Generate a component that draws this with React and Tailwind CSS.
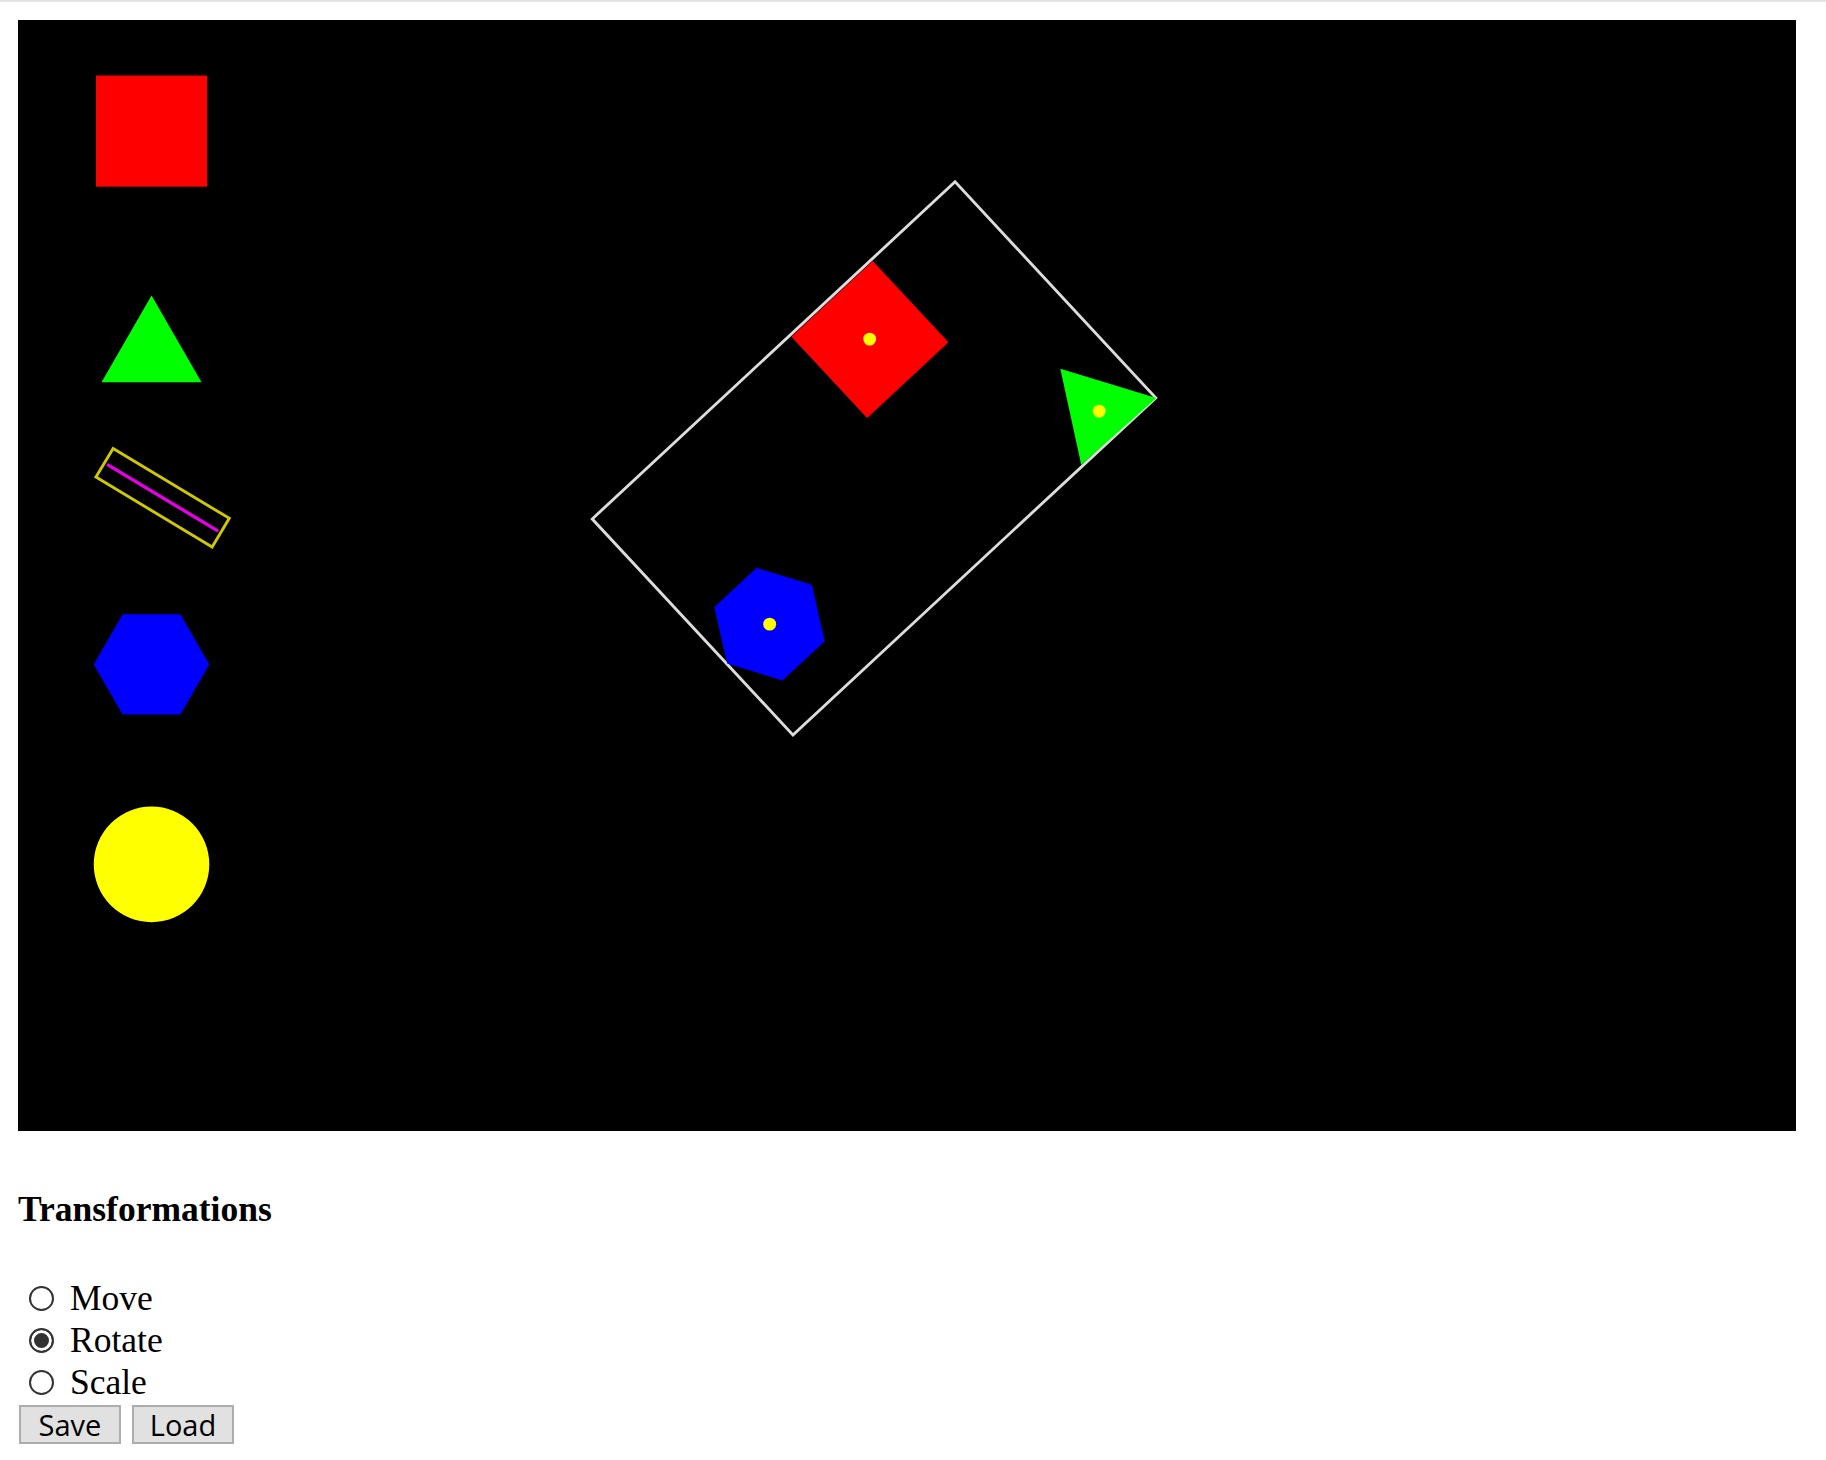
import { useState } from 'react';

const modes = ['Move', 'Rotate', 'Scale'];

function hexPoints(cx, cy, r, start = 0) {
  const pts = [];
  for (let i = 0; i < 6; i++) {
    const a = ((start + i * 60) * Math.PI) / 180;
    pts.push(`${(cx + r * Math.cos(a)).toFixed(2)},${(cy + r * Math.sin(a)).toFixed(2)}`);
  }
  return pts.join(' ');
}

function Stage() {
  return (
    <svg viewBox="0 0 800 500" className="block h-[1111px] w-[1778px] bg-black">
      {/* palette */}
      <rect x="35" y="25" width="50" height="50" fill="#ff0000" />
      <polygon points="60,124 82.5,163 37.5,163" fill="#00ff00" />
      <rect
        x="-30.5"
        y="-7.5"
        width="61"
        height="15"
        transform="translate(65 215) rotate(31)"
        fill="none"
        stroke="#d0c800"
        strokeWidth="1.3"
      />
      <line x1="40" y1="200" x2="90" y2="230" stroke="#e600e6" strokeWidth="1.5" />
      <polygon points={hexPoints(60, 290, 26)} fill="#0000ff" />
      <circle cx="60" cy="380" r="26" fill="#ffff00" />

      {/* selected group */}
      <rect
        x="-66.35"
        y="-111.45"
        width="132.7"
        height="222.9"
        transform="translate(385.15 197.3) rotate(47.1)"
        fill="none"
        stroke="#dcdcdc"
        strokeWidth="1.3"
      />
      <rect x="-25" y="-25" width="50" height="50" transform="translate(383.3 143.8) rotate(47)" fill="#ff0000" />
      <polygon points="469,156.9 512.2,170.1 478.4,200.2" fill="#00ff00" />
      <polygon points={hexPoints(338.1, 271.9, 26, 17.1)} fill="#0000ff" />
      <circle cx="383.2" cy="143.6" r="2.9" fill="#ffff00" />
      <circle cx="486.5" cy="176" r="2.9" fill="#ffff00" />
      <circle cx="338.2" cy="271.9" r="2.9" fill="#ffff00" />
    </svg>
  );
}

export default function App() {
  const [mode, setMode] = useState('Rotate');

  return (
    <div className="min-h-[1460px] bg-white font-['Liberation_Serif',serif] text-black">
      <div className="h-[2px] bg-[#e2e2e2]" />
      <div className="px-[18px] pt-[18px]">
        <Stage />

        <h4 className="mt-[58px] text-[35.5px] font-bold leading-[40px]">Transformations</h4>

        <div className="mt-[48px] flex flex-col">
          {modes.map((m) => (
            <label key={m} className="flex h-[42px] items-center text-[35.5px] leading-[42px]">
              <input
                type="radio"
                name="mode"
                checked={mode === m}
                onChange={() => setMode(m)}
                className="ml-[11px] h-[25px] w-[25px] appearance-none rounded-full border-[2.5px] border-[#333] bg-white checked:bg-[#333] checked:shadow-[inset_0_0_0_3px_white]"
              />
              <span className="ml-[16px]">{m}</span>
            </label>
          ))}
        </div>

        <div className="mt-[2px] flex gap-[11px] pl-px font-['Open_Sans',sans-serif]">
          <button
            type="button"
            className="h-[39px] w-[102px] border-2 border-[#adadad] bg-[#e1e1e1] text-[29px] leading-none text-black"
          >
            Save
          </button>
          <button
            type="button"
            className="h-[39px] w-[102px] border-2 border-[#adadad] bg-[#e1e1e1] text-[29px] leading-none text-black"
          >
            Load
          </button>
        </div>
      </div>
    </div>
  );
}
